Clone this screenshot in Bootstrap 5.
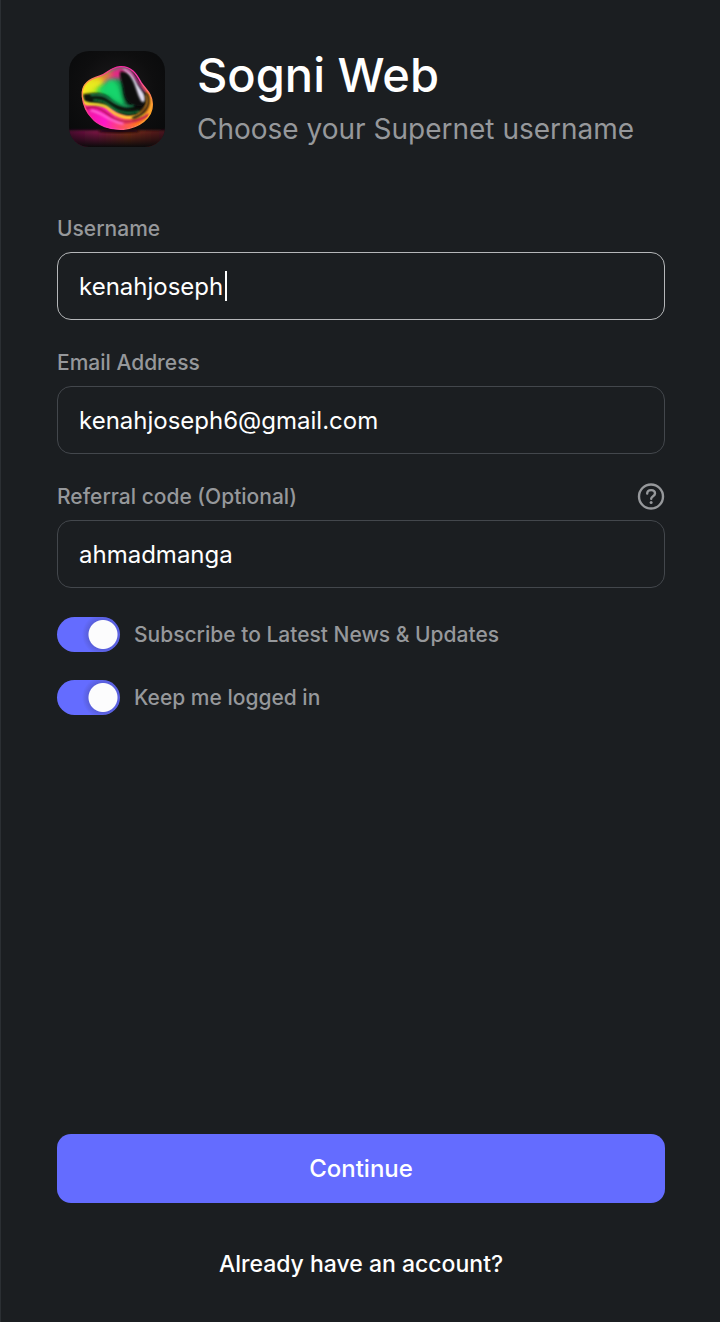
<!DOCTYPE html>
<html lang="en">
<head>
<meta charset="utf-8">
<meta name="viewport" content="width=device-width, initial-scale=1">
<title>Sogni Web</title>
<link href="https://cdn.jsdelivr.net/npm/bootstrap@5.3.0/dist/css/bootstrap.min.css" rel="stylesheet">
<style>
  body { background: #1b1e21; color: #fff; font-family: Inter, "Liberation Sans", sans-serif; }
  .signup { border-left: 1px solid #2b2f33; padding: 48px 55px 42px 56px; }
  .app-logo { width: 96px; height: 96px; margin: 3px 0 0 12px; border-radius: 20px; }
  .brand { gap: 32px; margin-bottom: 59px; }
  .brand h1 { font-size: 47px; line-height: 54px; font-weight: 500; }
  .brand p { font-size: 28px; line-height: 54px; color: #96989b; }
  .field { margin-bottom: 29px; }
  .field-head { height: 28px; margin-bottom: 9px; }
  .field-head label, .toggle label { font-size: 21px; line-height: 28px; font-weight: 500; color: #96989b; }
  .form-control.entry, .form-control.entry:focus { height: 68px; padding: 0 21px; font-size: 24px; color: #fff; background-color: transparent; border: 1px solid #43474c; border-radius: 14px; box-shadow: none; }
  .form-control.entry.editing { border-color: #b5b7b9; background: linear-gradient(#fff, #fff) 167px 50% / 2px 30px no-repeat; caret-color: transparent; }
  .help { color: #96989b; line-height: 0; }
  .toggle { gap: 14px; height: 35px; margin-bottom: 28px; padding: 0; min-height: 0; }
  .toggle .form-check-input { float: none; margin: 0; width: 63px; height: 35px; border: 0; background: radial-gradient(circle at 46px 50%, #fcfcfd 13px, #fcfcfd 14px, #595fdc 15px, #646cff 21px); border-radius: 18px; }
  .toggle .form-check-input:not(:checked) { background: radial-gradient(circle at 17px 50%, #fcfcfd 14px, #43474c 15px); }
  .btn.go { height: 69px; background: #646cff; color: #fff; font-size: 24px; font-weight: 500; border: 0; border-radius: 14px; }
  .signin { font-size: 23px; line-height: 32px; font-weight: 500; margin-top: 45px; color: #fff; }
</style>
</head>
<body>
<main class="signup min-vh-100 d-flex flex-column">
  <header class="brand d-flex align-items-start">
    <svg class="app-logo flex-shrink-0" viewBox="27 33 288 288" role="img" aria-label="Sogni logo">
      <defs>
        <radialGradient id="room" cx=".5" cy=".4" r=".65"><stop offset="0" stop-color="#1d1b1d"/><stop offset=".6" stop-color="#0e0e0f"/><stop offset="1" stop-color="#090a0b"/></radialGradient>
        <linearGradient id="floor"><stop offset="0" stop-color="#48072f"/><stop offset=".3" stop-color="#8d174f"/><stop offset=".6" stop-color="#8a3319"/><stop offset="1" stop-color="#4a1022"/></linearGradient>
        <linearGradient id="fade" x2="0" y2="1"><stop offset="0" stop-color="#0b0a0b" stop-opacity="0"/><stop offset="1" stop-color="#0b0a0b"/></linearGradient>
        <linearGradient id="rim" x1="68" y1="120" x2="270" y2="230" gradientUnits="userSpaceOnUse"><stop offset="0" stop-color="#ffb92c"/><stop offset=".3" stop-color="#f5239f"/><stop offset=".65" stop-color="#ff39b2"/><stop offset="1" stop-color="#ffa51f"/></linearGradient>
        <linearGradient id="base" x1="70" y1="200" x2="270" y2="240" gradientUnits="userSpaceOnUse"><stop offset="0" stop-color="#ed169c"/><stop offset=".35" stop-color="#ff18c6"/><stop offset=".6" stop-color="#fc4b6c"/><stop offset=".85" stop-color="#ff7a17"/><stop offset="1" stop-color="#ffb22f"/></linearGradient>
        <linearGradient id="crown" x1="80" y1="130" x2="220" y2="170" gradientUnits="userSpaceOnUse"><stop offset="0" stop-color="#ffe51b"/><stop offset=".2" stop-color="#b6e51b"/><stop offset=".4" stop-color="#16c94b"/><stop offset=".65" stop-color="#078746"/><stop offset=".85" stop-color="#07100d"/></linearGradient>
        <path id="blob" d="M67 170C62 130 91 117 120 108C143 101 149 83 180 80C215 78 230 103 243 127C258 150 277 161 277 193C278 235 236 263 190 268C150 270 113 256 95 233C78 215 70 197 67 170Z"/>
        <clipPath id="inside"><use href="#blob"/></clipPath>
        <filter id="b2" x="-40%" y="-40%" width="180%" height="180%"><feGaussianBlur stdDeviation="3"/></filter>
        <filter id="b5" x="-60%" y="-60%" width="220%" height="220%"><feGaussianBlur stdDeviation="8"/></filter>
      </defs>
      <rect x="27" y="33" width="288" height="288" fill="url(#room)"/>
      <rect x="10" y="271" width="322" height="60" fill="url(#floor)" filter="url(#b2)"/>
      <rect x="27" y="266" width="288" height="55" fill="url(#fade)"/>
      <ellipse cx="177" cy="273" rx="62" ry="5" fill="#120608" filter="url(#b2)"/>
      <use href="#blob" fill="url(#base)"/>
      <g clip-path="url(#inside)">
        <path d="M60 155C69 90 130 105 160 80C195 55 240 100 246 140C267 160 272 198 237 222C200 239 174 218 156 206C127 190 88 206 67 183Z" fill="url(#crown)" filter="url(#b2)"/>
        <path d="M118 111C146 106 151 78 190 80L220 107L194 119C169 108 152 127 132 135Z" fill="#e52787" filter="url(#b5)"/>
        <path d="M104 117C128 115 143 100 157 94C153 111 130 133 90 138Z" fill="#ff9d18" filter="url(#b5)"/>
        <path d="M75 145C85 122 112 113 135 122C120 138 98 146 76 157Z" fill="#e8ef21" filter="url(#b5)"/>
        <path d="M141 121C154 113 170 120 180 143C186 161 191 190 209 203C178 204 160 180 145 168C131 161 115 157 112 149C126 146 136 137 141 121Z" fill="#15d56c" filter="url(#b5)"/>
        <path d="M180 95C208 90 231 118 243 143C256 165 263 180 246 198C214 203 197 181 192 157C189 128 177 115 180 95Z" fill="#080b0b" filter="url(#b2)"/>
        <path d="M187 87C209 84 221 106 229 125C237 148 259 158 254 182C250 190 244 186 240 176C227 152 225 109 187 87Z" fill="#e1ddf0" filter="url(#b2)"/>
        <path d="M198 88C225 101 236 135 258 155" fill="none" stroke="#d93a9e" stroke-width="5" filter="url(#b2)"/>
        <path d="M69 163C96 160 125 153 146 172C169 197 204 212 240 206C231 222 193 224 163 208C134 193 104 195 72 184Z" fill="#08140e" filter="url(#b2)"/>
        <path d="M92 165C119 164 130 163 148 178C169 194 197 202 222 197" fill="none" stroke="#20ae66" stroke-width="4" filter="url(#b2)"/>
        <path d="M100 181C126 179 140 189 156 202C179 220 211 223 239 214" fill="none" stroke="#0d7d3d" stroke-width="6" filter="url(#b2)"/>
        <path d="M64 179C80 206 114 183 143 204C169 231 211 243 254 221" fill="none" stroke="#ffd631" stroke-width="9" filter="url(#b2)"/>
        <path d="M75 207C112 191 132 215 158 234C188 250 227 249 266 224" fill="none" stroke="#b51455" stroke-width="7" filter="url(#b2)"/>
        <path d="M92 211C130 218 151 247 190 251" fill="none" stroke="#ff71d8" stroke-width="6" filter="url(#b2)"/>
        <path d="M260 161C275 195 255 223 217 235" fill="none" stroke="#281d09" stroke-width="8" filter="url(#b2)"/>
        <path d="M257 165C269 191 250 210 232 221" fill="none" stroke="#ffac28" stroke-width="3" filter="url(#b2)"/>
      </g>
      <use href="#blob" fill="none" stroke="url(#rim)" stroke-width="4"/>
    </svg>
    <div>
      <h1 class="mb-0">Sogni Web</h1>
      <p class="mb-0">Choose your Supernet username</p>
    </div>
  </header>
  <form class="d-flex flex-column flex-grow-1">
    <div class="field">
      <div class="field-head d-flex align-items-center"><label for="username">Username</label></div>
      <input class="form-control entry editing" id="username" type="text" value="kenahjoseph">
    </div>
    <div class="field">
      <div class="field-head d-flex align-items-center"><label for="email">Email Address</label></div>
      <input class="form-control entry" id="email" type="email" value="kenahjoseph6@gmail.com">
    </div>
    <div class="field">
      <div class="field-head d-flex align-items-center justify-content-between">
        <label for="referral">Referral code (Optional)</label>
        <button class="help btn p-0 border-0" type="button" aria-label="About referral codes">
          <svg width="28" height="28" viewBox="0 0 28 28" fill="none" stroke="currentColor" stroke-width="2.4" stroke-linecap="round"><circle cx="14" cy="13.5" r="12"/><path d="M10.2 10.6c0-2.1 1.6-3.5 3.9-3.5s3.9 1.3 3.9 3.4c0 2.7-3.8 2.6-3.8 5.2"/><circle cx="14.1" cy="19.5" r="1.5" fill="currentColor" stroke="none"/></svg>
        </button>
      </div>
      <input class="form-control entry" id="referral" type="text" value="ahmadmanga">
    </div>
    <div class="toggle form-check form-switch d-flex align-items-center">
      <input class="form-check-input flex-shrink-0" type="checkbox" role="switch" id="news" checked>
      <label for="news">Subscribe to Latest News &amp; Updates</label>
    </div>
    <div class="toggle form-check form-switch d-flex align-items-center">
      <input class="form-check-input flex-shrink-0" type="checkbox" role="switch" id="keep" checked>
      <label for="keep">Keep me logged in</label>
    </div>
    <button class="btn go w-100 mt-auto" type="submit">Continue</button>
    <a class="signin align-self-center text-decoration-none" href="#">Already have an account?</a>
  </form>
</main>
<script src="https://cdn.jsdelivr.net/npm/bootstrap@5.3.0/dist/js/bootstrap.bundle.min.js"></script>
</body>
</html>
